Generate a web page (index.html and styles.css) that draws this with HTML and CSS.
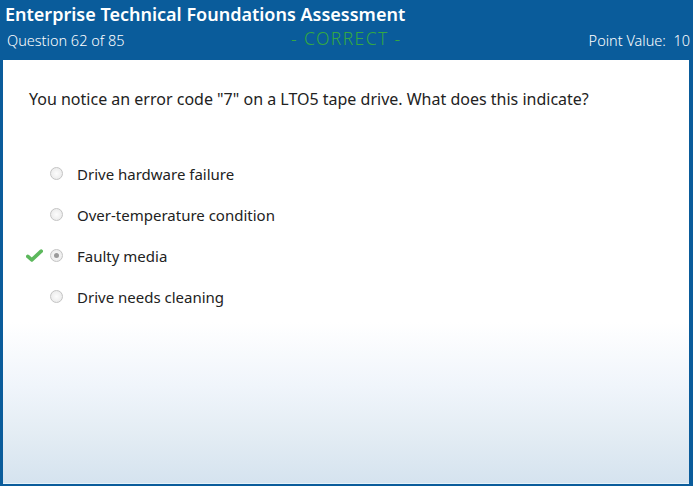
FILE: index.html
```html
<!DOCTYPE html>
<html>
<head>
<meta charset="utf-8">
<link rel="stylesheet" href="styles.css">
</head>
<body>
<div class="app">
  <header class="header">
    <div class="title">Enterprise Technical Foundations Assessment</div>
    <div class="subrow">
      <span class="qnum">Question 62 of 85</span>
      <span class="status">- CORRECT -</span>
      <span class="points">Point Value:&nbsp; 10</span>
    </div>
  </header>
  <main class="panel">
    <p class="question">You notice an error code "7" on a LTO5 tape drive. What does this indicate?</p>
    <ul class="options">
      <li class="option"><span class="mark"></span><span class="radio"></span><span class="label">Drive hardware failure</span></li>
      <li class="option"><span class="mark"></span><span class="radio"></span><span class="label">Over-temperature condition</span></li>
      <li class="option"><span class="mark"><svg width="17" height="13" viewBox="0 0 17 13"><path d="M1.8 7.4 L5.8 10.8 L15.2 2.2" fill="none" stroke="#5cb85c" stroke-width="3.6" stroke-linecap="round" stroke-linejoin="round"/></svg></span><span class="radio checked"></span><span class="label">Faulty media</span></li>
      <li class="option"><span class="mark"></span><span class="radio"></span><span class="label">Drive needs cleaning</span></li>
    </ul>
  </main>
</div>
</body>
</html>
```
FILE: styles.css
```css
html, body {
  margin: 0;
  padding: 0;
}
body {
  background: #0a5c9b;
  font-family: "Noto Sans", "Open Sans", sans-serif;
  width: 693px;
  height: 486px;
  overflow: hidden;
}
.app {
  display: flex;
  flex-direction: column;
  height: 486px;
}
.header {
  height: 60px;
  box-sizing: border-box;
  padding: 1px 3px 0 5px;
  color: #fff;
  background: #0a5c9b;
}
.title {
  font-size: 18px;
  font-weight: 600;
  line-height: 26px;
}
.subrow {
  display: flex;
  align-items: center;
  height: 26px;
}
.qnum {
  font-size: 14.5px;
  font-weight: 300;
  width: 284px;
  padding-left: 2px;
}
.status {
  color: #34a843;
  font-size: 17.5px;
  font-weight: 300;
  letter-spacing: 1.4px;
  margin-top: -5px;
}
.points {
  margin-left: auto;
  font-size: 14.5px;
  font-weight: 300;
}
.panel {
  flex: 1;
  margin: 0 4px 2px 3px;
  background: linear-gradient(to bottom, #ffffff 0%, #ffffff 62%, #f0f5fb 77%, #e4edf4 88%, #d5e3ef 100%);
  border-bottom: 1px solid #e6f2fa;
}
.question {
  margin: 0;
  padding: 28px 0 0 26px;
  font-size: 16px;
  line-height: 22px;
  color: #222;
}
.options {
  list-style: none;
  margin: 0;
  padding: 43px 0 0 0;
}
.option {
  display: flex;
  align-items: center;
  height: 41px;
  color: #222;
  font-size: 15px;
}
.mark {
  width: 47px;
  display: flex;
  justify-content: flex-end;
  box-sizing: border-box;
  padding-right: 7px;
}
.radio {
  width: 11px;
  height: 11px;
  border-radius: 50%;
  border: 1px solid #c4c4c4;
  background: radial-gradient(circle, #fcfcfc 0%, #e6e6e6 100%);
  margin-right: 14px;
  position: relative;
}
.radio.checked::after {
  content: "";
  position: absolute;
  left: 3px;
  top: 3px;
  width: 5px;
  height: 5px;
  border-radius: 50%;
  background: #9a9a9a;
}
.label {
  line-height: 20px;
}
```
